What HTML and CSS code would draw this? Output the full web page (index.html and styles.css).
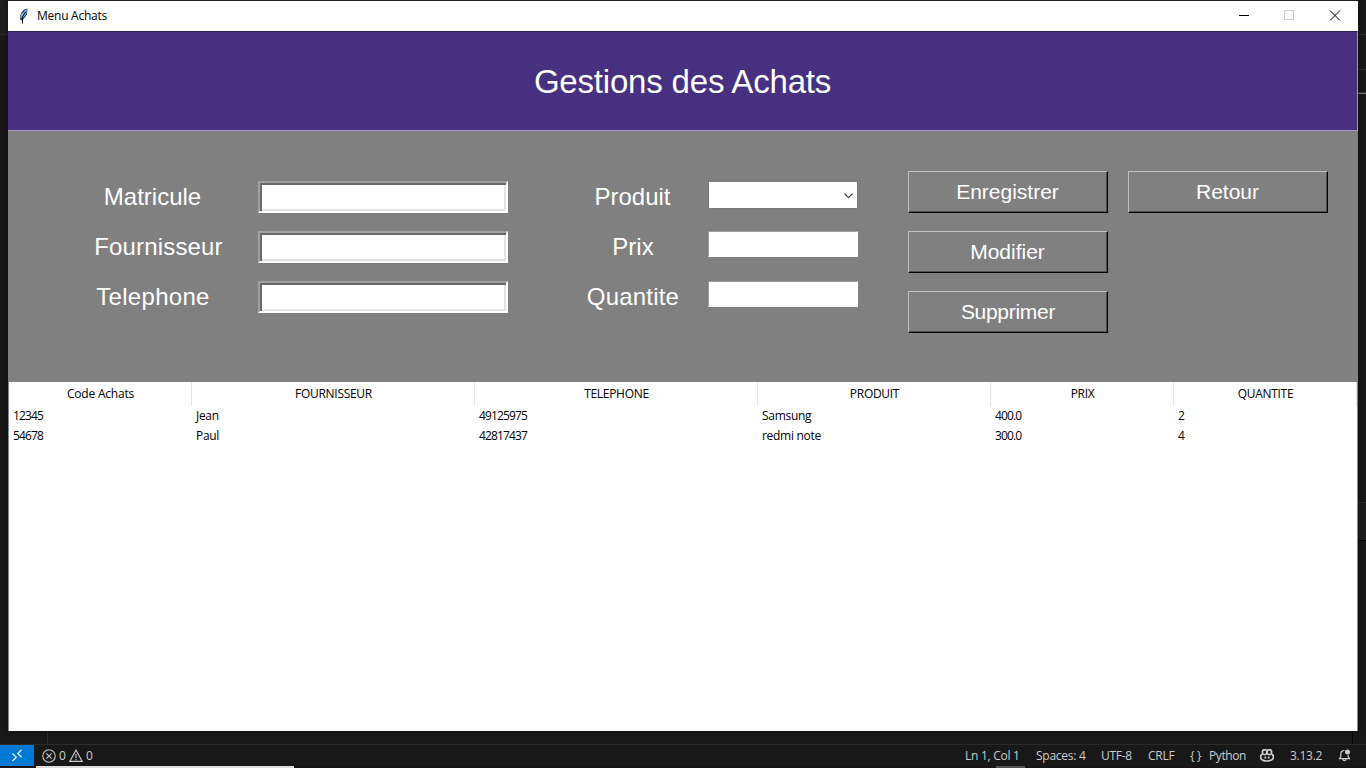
FILE: index.html
```html
<!DOCTYPE html>
<html lang="fr">
<head>
<meta charset="utf-8">
<title>Menu Achats</title>
<link rel="stylesheet" href="styles.css">
</head>
<body>
<div class="desktop">
  <i class="edge edge-left"></i>
  <i class="edge edge-right"></i>
  <i class="edge edge-right-line"></i>
  <i class="edge edge-right-low"></i>
  <main class="window">
    <header class="titlebar">
      <svg class="feather" width="10" height="16" viewBox="0 0 10 16"><path d="M8.500.5 5 1.500 2.500 4.500 1 8v3.500l2 1L5.500 10 8 6.500z" fill="#263b50"/><path d="M8 1 5.500 2.500 3.500 5.500 2 9l1.500 1L6 8l1.500-3z" fill="#6caaf0"/><path d="M3.500 5 2 8v2" stroke="#aac4d4" fill="none"/><path d="M6.500 4 3.500 9v6.500" stroke="#111" fill="none"/></svg>
      <span class="caption">Menu Achats</span>
      <svg class="controls" width="104" height="12" viewBox="0 0 104 12" fill="none"><path d="M1 5.500h10" stroke="#000"/><rect x="46.500" y=".5" width="9" height="9" stroke="#ccc"/><path d="m92 .5 10 10m0-10-10 10" stroke="#000"/></svg>
    </header>
    <section class="banner"><h1>Gestions des Achats</h1></section>
    <form class="form">
      <div class="fields main-fields">
        <label class="matricule">Matricule</label><input type="text" class="sunken">
        <label class="shifted">Fournisseur</label><input type="text" class="sunken">
        <label class="phone">Telephone</label><input type="text" class="sunken">
      </div>
      <div class="fields product-fields">
        <label class="product">Produit</label>
        <div class="combo"><svg width="9" height="6" viewBox="0 0 9 6" fill="none"><path d="m.5.700 4 4 4-4" stroke="#444" stroke-width="1.200"/></svg></div>
        <label>Prix</label><input type="text" class="thin">
        <label class="quantity">Quantite</label><input type="text" class="thin">
      </div>
      <div class="actions">
        <button type="button">Enregistrer</button>
        <button type="button">Retour</button>
        <button type="button">Modifier</button>
        <button type="button" class="third">Supprimer</button>
      </div>
    </form>
    <section class="table">
      <div class="row head"><span>Code Achats</span><span>FOURNISSEUR</span><span>TELEPHONE</span><span>PRODUIT</span><span>PRIX</span><span>QUANTITE</span></div>
      <div class="row"><span class="num">12345</span><span>Jean</span><span class="num">49125975</span><span>Samsung</span><span class="num">400.0</span><span>2</span></div>
      <div class="row"><span class="num">54678</span><span>Paul</span><span class="num">42817437</span><span>redmi note</span><span class="num">300.0</span><span>4</span></div>
    </section>
  </main>
  <div class="editor-gap"></div>
  <footer class="status">
    <div class="remote"><svg width="12" height="13" viewBox="0 0 12 13" fill="none" stroke="#e4f2ff" stroke-width="1.300"><path d="m1.500 4.500 3.800 3.700-3.800 3.800M10.500 .7 6.700 4.500l3.800 3.700"/></svg></div>
    <div class="problems">
      <svg width="14" height="14" viewBox="0 0 13 13" fill="none" stroke="#ccc"><circle cx="6.500" cy="6.500" r="5.800"/><path d="m4 4 5 5m0-5-5 5"/></svg><span>0</span>
      <svg width="14" height="14" viewBox="0 0 13 13" fill="none" stroke="#ccc"><path d="M6.500 1 .8 11.500h11.400zM6.500 4.500v4M6.500 9.300v1.200"/></svg><span>0</span>
    </div>
    <div class="info">
      <span>Ln 1, Col 1</span><span>Spaces: 4</span><span>UTF-8</span><span>CRLF</span><span class="braces">{ }</span><span class="py">Python</span>
      <svg width="14" height="13" viewBox="0 0 14 13" fill="none" stroke="#ccc" stroke-width="1.700"><rect x="2.500" y=".8" width="4.300" height="4.700" rx="1.500"/><rect x="7.200" y=".8" width="4.300" height="4.700" rx="1.500"/><path d="M2 5.200.8 6.500v3C3 12.800 11 12.800 13.200 9.500v-3L12 5.200M5.300 7.500v2M8.700 7.500v2"/></svg>
      <span>3.13.2</span>
      <svg width="13" height="13" viewBox="0 0 12 13" fill="none" stroke="#ccc" stroke-width="1.200"><path d="M6 1.500C3.500 1.500 2.300 3 2.300 5.200v2.300L1 9.700h10L9.700 7.500V6M4.500 10c0 2.300 3 2.300 3 0"/><circle cx="9" cy="3" r="2.500" fill="#ccc" stroke="none"/></svg>
    </div>
  </footer>
  <div class="taskbar"><i class="preview"></i><i class="marker"></i></div>
</div>
</body>
</html>
```
FILE: styles.css
```css
* { box-sizing: border-box; }
body { margin: 0; overflow: hidden; }
.desktop { position: relative; width: 1366px; height: 768px; background: #181818; display: flex; flex-direction: column; font: 12px/16px "Open Sans", "Noto Sans", sans-serif; }
.edge { position: absolute; }
.edge-left { left: 0; top: 0; width: 8px; height: 35px; background: #1f1f1f; border-bottom: 1px solid #2b2b2b; }
.edge-right { right: 0; top: 34px; width: 8px; height: 36px; border: solid #2b2b2b; border-width: 1px 0; }
.edge-right-line { right: 0; top: 92px; width: 8px; height: 2px; background: #777; border-top: 1px solid #333; }
.edge-right-low { right: 0; top: 502px; width: 8px; height: 39px; background: #1c1c1c; border: solid #2b2b2b; border-width: 1px 0; border-bottom-color: #050505; }
.window { position: relative; width: 1350px; height: 731px; margin-left: 8px; flex: none; background: #fff; border-top: 1px solid #222; display: flex; flex-direction: column; box-shadow: 0 0 6px #0006; }
.titlebar { height: 30px; flex: none; display: flex; align-items: center; padding-left: 11px; color: #000; }
.caption { margin-left: 8px; letter-spacing: -.25px; }
.controls { margin: 0 16px 0 auto; }
.banner { height: 100px; flex: none; display: flex; align-items: center; justify-content: center; background: #46307f; border: solid #a596c8; border-width: 1px 1px 1px 0; border-top-color: #2b1d4e; color: #fff; }
h1 { margin: 2px 0 0; font: 33px/40px "Liberation Sans", sans-serif; letter-spacing: -.19px; }
.form { height: 251px; flex: none; background: #808080; display: flex; align-items: flex-start; }
.fields { display: grid; grid-auto-rows: 32px; row-gap: 18px; margin-top: 50px; font: 24px/32px "Liberation Sans", sans-serif; color: #fff; }
.main-fields { grid-template-columns: 210px 250px; padding-left: 40px; }
.product-fields { grid-template-columns: 150px 150px; padding-left: 50px; }
label { text-align: center; }
.matricule, .product { padding-right: 1px; }
.shifted { padding-left: 11px; letter-spacing: .15px; }
.phone { letter-spacing: .3px; }
.quantity { letter-spacing: .2px; }
input { margin: 0; outline: 0; }
.sunken { width: 250px; height: 32px; background: linear-gradient(#fff, #fff); border: 2px solid; border-color: #a0a0a0 #fff #fff #a0a0a0; box-shadow: inset 2px 2px #696969, inset -2px -2px #e3e3e3; }
.thin { width: 150px; height: 26px; background: #fff; border: 1px solid; border-color: #a0a0a0 #fff #fff #a0a0a0; }
.combo { width: 150px; height: 28px; background: #fff; border: 1px solid #7a7a7a; display: flex; align-items: center; justify-content: flex-end; padding: 2px 4px 0 0; }
.actions { display: grid; grid-template-columns: 200px 200px; grid-auto-rows: 42px; gap: 18px 20px; margin: 40px 0 0 50px; }
button { padding: 0 1px 1px 0; background: #808080; border: 1px solid; border-color: #c0c0c0 #000 #000 #c0c0c0; box-shadow: inset -1px -1px #505050; color: #fff; font: 21px/32px "Liberation Sans", sans-serif; }
.third { grid-row: 3; padding-right: 0; letter-spacing: -.3px; }
.table { flex: 1; border: solid #828790; border-width: 0 1px; color: #000; letter-spacing: -.3px; }
.row { display: grid; grid-template-columns: 183px 283px 283px 233px 183px 183px; height: 20px; line-height: 20px; }
.row span { padding-left: 4px; }
.row .num { letter-spacing: -.85px; }
.head { height: 24px; line-height: 24px; }
.head span { padding: 0 0 0 1px; text-align: center; border-right: 1px solid #e5e5e5; }
.head span:first-child { letter-spacing: -.2px; }
.editor-gap { height: 13px; flex: none; margin-left: 47px; width: 1306px; border: solid #2b2b2b; border-width: 0 1px; border-right-color: #050505; }
.status { height: 22px; flex: none; display: flex; align-items: center; color: #ccc; border-top: 1px solid #2b2b2b; }
.remote { width: 34px; height: 21px; background: #0078d4; display: flex; align-items: center; justify-content: center; }
.problems { display: flex; align-items: center; gap: 3px; margin-left: 8px; }
.info { display: grid; grid-template-columns: 71px 65px 47px 42px 19px 51px 30px 48px 13px; align-items: center; margin: 0 15px 0 auto; white-space: nowrap; letter-spacing: -.27px; }
.py { letter-spacing: -.4px; }
.taskbar { flex: 1; display: flex; background: #181415; }
.preview { width: 258px; height: 2px; margin-left: 36px; background: #ddd; align-self: flex-end; }
.marker { width: 29px; height: 2px; margin-left: 702px; background: #555; align-self: flex-start; }
```
